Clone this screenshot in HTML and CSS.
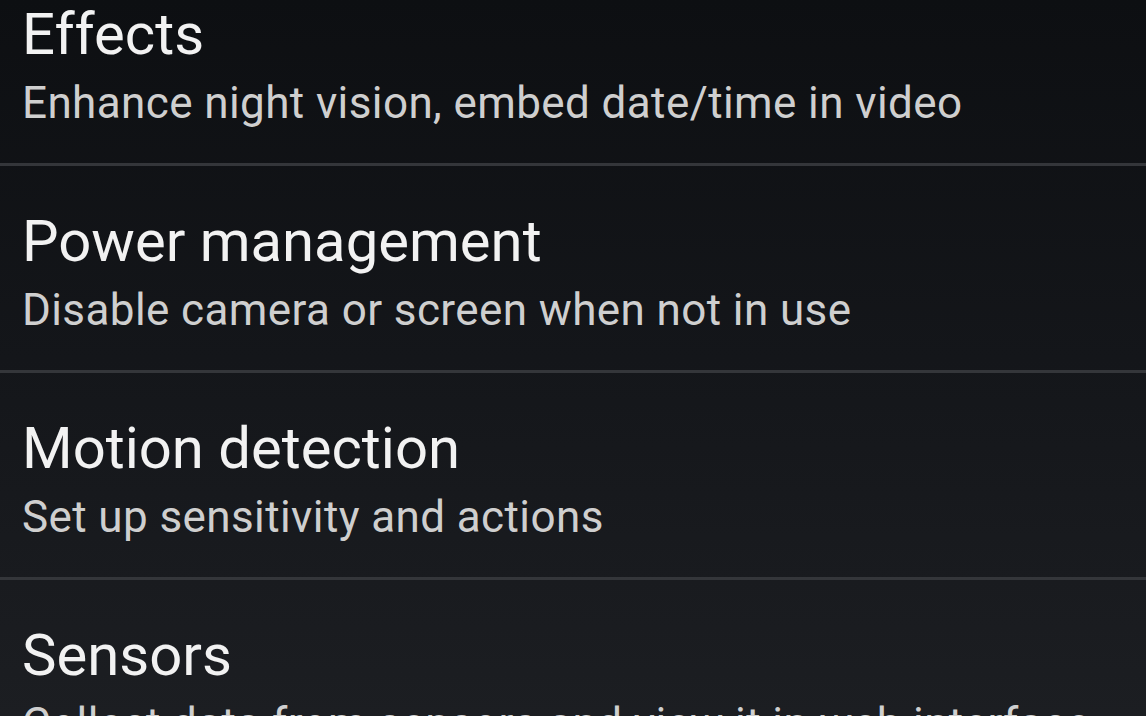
FILE: index.html
```html
<!DOCTYPE html>
<html lang="en">
<head>
<meta charset="utf-8">
<title>Settings</title>
<link rel="stylesheet" href="styles.css">
</head>
<body>
<main class="screen">
  <ul class="prefs">
    <li class="pref">
      <div class="pref-title">Effects</div>
      <div class="pref-summary">Enhance night vision, embed date/time in video</div>
    </li>
    <li class="pref">
      <div class="pref-title">Power management</div>
      <div class="pref-summary">Disable camera or screen when not in use</div>
    </li>
    <li class="pref">
      <div class="pref-title">Motion detection</div>
      <div class="pref-summary">Set up sensitivity and actions</div>
    </li>
    <li class="pref">
      <div class="pref-title">Sensors</div>
      <div class="pref-summary">Collect data from sensors and view it in web interface</div>
    </li>
  </ul>
</main>
</body>
</html>
```

FILE: styles.css
```css
html, body {
  margin: 0;
  padding: 0;
  height: 100%;
}
body {
  overflow: hidden;
  background: linear-gradient(180deg, #0d0f12 0%, #14161a 50%, #1c1e22 100%);
  font-family: Roboto, "Noto Sans", sans-serif;
}
.screen {
  width: 1146px;
  height: 716px;
  overflow: hidden;
}
.prefs {
  list-style: none;
  margin: -41px 0 0 0;
  padding: 0;
}
.pref {
  display: flex;
  flex-direction: column;
  height: 207px;
  box-sizing: border-box;
  padding: 43px 0 0 22px;
  border-bottom: 3px solid #34363a;
}
.pref-title {
  font-size: 58px;
  line-height: 64px;
  color: #f2f2f2;
  white-space: nowrap;
}
.pref-summary {
  margin-top: 13px;
  font-size: 44px;
  line-height: 48px;
  letter-spacing: 0.4px;
  color: #cfcfcf;
  white-space: nowrap;
}
```
